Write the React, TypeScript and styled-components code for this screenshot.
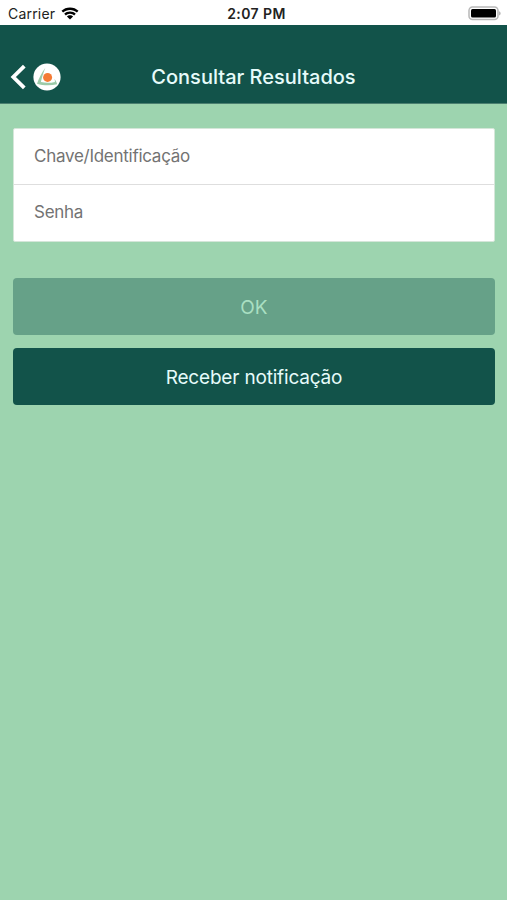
import React from "react";
import styled, { createGlobalStyle } from "styled-components";

const GlobalStyle = createGlobalStyle`
  * { box-sizing: border-box; }
  body {
    margin: 0;
    background: #9dd4af;
    font-family: Inter, "Liberation Sans", sans-serif;
  }
`;

const Screen = styled.div`
  display: flex;
  flex-direction: column;
  min-height: 100vh;
  background: #9dd4af;
`;

const StatusBar = styled.div`
  display: grid;
  grid-template-columns: 1fr auto 1fr;
  align-items: center;
  height: 25px;
  padding: 2px 6px 0 8px;
  background: #fff;
  color: #222;
  line-height: 20px;
`;

const Carrier = styled.div`
  display: flex;
  align-items: center;
  gap: 6px;
  font-size: 14px;
  letter-spacing: 0.2px;
`;

const Clock = styled.div`
  padding-left: 4px;
  font-size: 14px;
  font-weight: 600;
  letter-spacing: 0.4px;
`;

const Battery = styled.div`
  display: flex;
  justify-content: flex-end;
`;

const Header = styled.header`
  display: grid;
  grid-template-columns: 1fr auto 1fr;
  align-items: center;
  height: 79px;
  padding: 26px 10px 0;
  background: #12534a;
  border-bottom: 1px solid #4b7f70;
`;

const BackButton = styled.button`
  display: flex;
  align-items: center;
  gap: 5px;
  padding: 0;
  border: 0;
  background: none;
`;

const Title = styled.h1`
  margin: 0;
  color: #e6fbfa;
  font-size: 20px;
  font-weight: 500;
  line-height: 26px;
`;

const Content = styled.main`
  display: flex;
  flex-direction: column;
  padding: 24px 12px 0 13px;
`;

const FieldGroup = styled.div`
  margin-bottom: 36px;
  border: 1px solid #d5e6d9;
  border-radius: 2px;
  background: #fff;
`;

const Field = styled.input`
  display: block;
  width: 100%;
  height: 55px;
  padding: 0 20px 2px;
  border: 0;
  background: transparent;
  font-family: inherit;
  font-size: 17px;
  letter-spacing: -0.27px;
  outline: none;

  & + & {
    height: 57px;
    border-top: 1px solid #dedede;
  }

  &::placeholder {
    color: #737373;
    opacity: 1;
  }
`;

const ActionButton = styled.button<{ $muted?: boolean }>`
  height: 57px;
  margin-bottom: 13px;
  padding: 2px 0 0;
  border: 0;
  border-radius: 4px;
  background: ${(p) => (p.$muted ? "#66a188" : "#12534a")};
  color: ${(p) => (p.$muted ? "#a9dfc2" : "#e6fbfa")};
  font-family: inherit;
  font-size: 19px;
  letter-spacing: ${(p) => (p.$muted ? "0" : "-0.18px")};
`;

const WifiIcon = () => (
  <svg width="18" height="13" viewBox="0 0 18 13" fill="#000">
    <path d="M9 .5C5.700.5 2.700 1.700.5 3.800L2.100 5.600C4 3.900 6.300 2.900 9 2.900s5 1 6.900 2.700l1.600-1.800C15.300 1.700 12.300.5 9 .5Z" />
    <path d="M9 4.400c-2.300 0-4.300.9-5.800 2.300l1.700 1.800C6 7.500 7.400 6.800 9 6.800s3 .7 4.100 1.700l1.700-1.800C13.300 5.300 11.300 4.400 9 4.400Z" />
    <path d="M9 8.200c-1.200 0-2.300.5-3.100 1.200L9 12.600l3.100-3.200C11.300 8.700 10.200 8.200 9 8.200Z" />
  </svg>
);

const BatteryIcon = () => (
  <svg width="33" height="15" viewBox="0 0 33 15">
    <rect x="1" y="1" width="29" height="12.500" rx="3.500" fill="#fff" stroke="#b8b8b8" strokeWidth="1.500" />
    <rect x="3" y="3" width="25" height="8.500" rx="1.500" fill="#000" />
    <path d="M31.300 5.200c1.600.7 1.600 3.600 0 4.300Z" fill="#999" />
  </svg>
);

const BackIcon = () => (
  <svg width="18" height="26" viewBox="0 0 18 26" fill="none" stroke="#fff" strokeWidth="3.800">
    <path d="M14.300 2.200 3.300 13l11 10.800" />
  </svg>
);

const Logo = () => (
  <svg width="28" height="28" viewBox="0 0 28 28">
    <circle cx="14" cy="14" r="13.600" fill="#fff" />
    <path
      d="M12.400 4.800C8.700 9.600 6 15 4 20.800c6.200 1.900 14 1.900 20.200.5-.6-2.200-1.600-4.100-2.800-5.600.4 1.100.6 2.300.5 3.200-4.500 1.100-9.300 1.100-14 .2 1-4.900 2.600-9.800 4.500-14.300Z"
      fill="#9ccaa9"
    />
    <circle cx="14.600" cy="14.400" r="4.500" fill="#f47b35" />
  </svg>
);

export default function App() {
  return (
    <>
      <GlobalStyle />
      <Screen>
        <StatusBar>
          <Carrier>
            Carrier
            <WifiIcon />
          </Carrier>
          <Clock>2:07 PM</Clock>
          <Battery>
            <BatteryIcon />
          </Battery>
        </StatusBar>
        <Header>
          <BackButton aria-label="Voltar">
            <BackIcon />
            <Logo />
          </BackButton>
          <Title>Consultar Resultados</Title>
        </Header>
        <Content>
          <FieldGroup>
            <Field type="text" placeholder="Chave/Identificação" />
            <Field type="password" placeholder="Senha" />
          </FieldGroup>
          <ActionButton $muted>OK</ActionButton>
          <ActionButton>Receber notificação</ActionButton>
        </Content>
      </Screen>
    </>
  );
}
